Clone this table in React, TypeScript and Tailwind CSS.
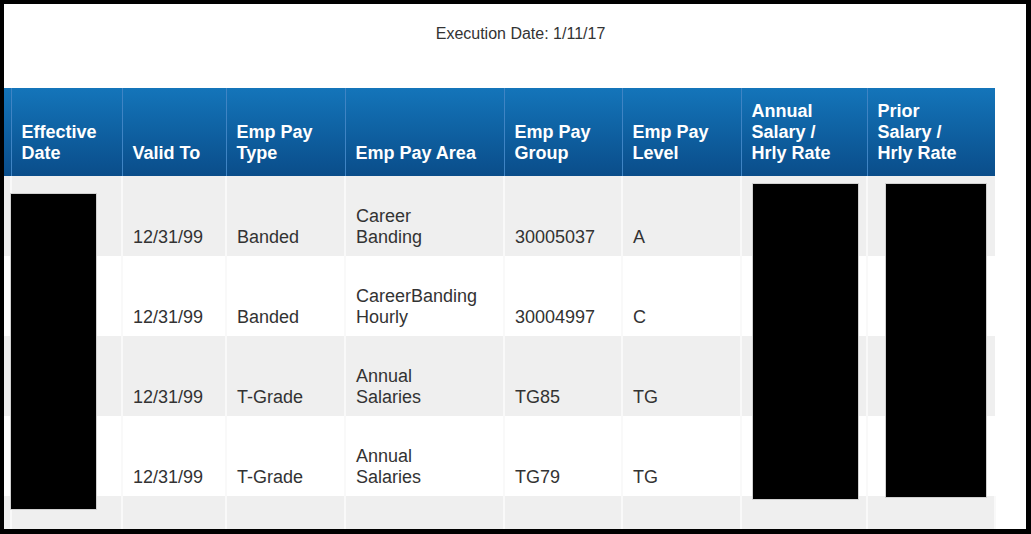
import React from 'react';

const headers: string[][] = [
    [],
    ['Effective', 'Date'],
    ['Valid To'],
    ['Emp Pay', 'Type'],
    ['Emp Pay Area'],
    ['Emp Pay', 'Group'],
    ['Emp Pay', 'Level'],
    ['Annual', 'Salary /', 'Hrly Rate'],
    ['Prior', 'Salary /', 'Hrly Rate'],
];

const widths = ['w-[7px]', 'w-[111px]', 'w-[104px]', 'w-[119px]', 'w-[159px]', 'w-[118px]', 'w-[119px]', 'w-[126px]', 'w-[128px]'];

const rows: string[][][] = [
    [['12/31/99'], ['Banded'], ['Career', 'Banding'], ['30005037'], ['A']],
    [['12/31/99'], ['Banded'], ['CareerBanding', 'Hourly'], ['30004997'], ['C']],
    [['12/31/99'], ['T-Grade'], ['Annual', 'Salaries'], ['TG85'], ['TG']],
    [['12/31/99'], ['T-Grade'], ['Annual', 'Salaries'], ['TG79'], ['TG']],
];

const Lines = ({lines}: {lines: string[]}) => (
    <>
        {lines.map((l, i) => (
            <div key={i} className="whitespace-nowrap">{l}</div>
        ))}
    </>
);

const App = () => {
    return (
        <div
            className="relative w-[1031px] h-[534px] overflow-hidden bg-white border-t-4 border-l-4 border-r-[5px] border-b-[5px] border-black text-[#333]"
            style={{fontFamily: '"Liberation Sans", Arial, sans-serif'}}
        >
            {/* Title */}
            <div className="h-[84px] pt-[18px] pl-[11px] text-center text-[16px] leading-[24px]">
                Execution Date: 1/11/17
            </div>

            <table className="table-fixed w-[991px] border-collapse">
                <colgroup>
                    {widths.map((w, i) => (
                        <col key={i} className={w}/>
                    ))}
                </colgroup>
                <thead>
                    <tr className="h-[88px] bg-gradient-to-b from-[#1475ba] to-[#0a4d8a]">
                        {headers.map((h, i) => (
                            <th
                                key={i}
                                className={`align-bottom text-left font-bold text-white text-[18px] leading-[21px] pb-[12px] ${i === 0 ? 'px-0' : 'px-[10px] border-l border-[#3f84c4]'}`}
                            >
                                <Lines lines={h}/>
                            </th>
                        ))}
                    </tr>
                </thead>
                <tbody>
                    {rows.map((r, ri) => (
                        <tr key={ri} className={`h-[80px] ${ri % 2 === 0 ? 'bg-[#efefef]' : 'bg-white'}`}>
                            <td className="border-r-2 border-[#f9f9f9]"></td>
                            <td className="border-r-2 border-[#f9f9f9]"></td>
                            {r.map((c, ci) => (
                                <td
                                    key={ci}
                                    className="align-bottom px-[10px] pb-[8px] text-[18px] leading-[21px] border-r-2 border-[#f9f9f9]"
                                >
                                    <Lines lines={c}/>
                                </td>
                            ))}
                            <td className="border-r-2 border-[#f9f9f9]"></td>
                            <td></td>
                        </tr>
                    ))}
                    <tr className="h-[33px] bg-[#efefef]">
                        {headers.map((_, i) => (
                            <td key={i} className="border-r-2 border-[#f9f9f9]"></td>
                        ))}
                    </tr>
                </tbody>
            </table>

            {/* redaction boxes */}
            <div className="absolute left-[6px] top-[189px] w-[87px] h-[317px] bg-black border border-[#d0d0d0]"></div>
            <div className="absolute left-[748px] top-[179px] w-[107px] h-[317px] bg-black border border-[#d0d0d0]"></div>
            <div className="absolute left-[881px] top-[179px] w-[102px] h-[315px] bg-black border border-[#d0d0d0]"></div>
        </div>
    );
};

export default App;
